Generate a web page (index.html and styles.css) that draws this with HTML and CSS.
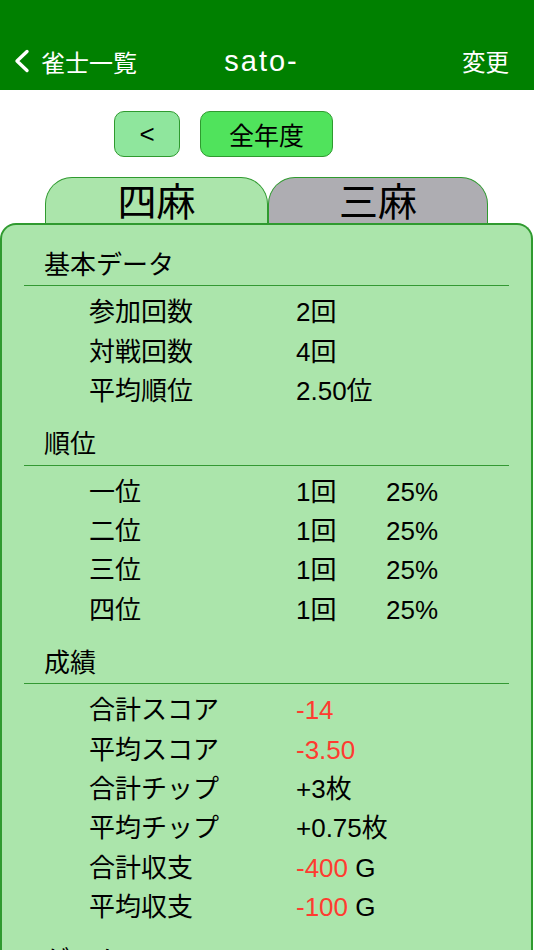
FILE: index.html
```html
<!DOCTYPE html>
<html lang="ja">
<head>
<meta charset="utf-8">
<title>sato-</title>
<link rel="stylesheet" href="styles.css">
</head>
<body>
<header class="nav">
  <div class="nav-left">
    <svg class="chev" width="18" height="24" viewBox="0 0 18 24"><path d="M14 2.5 L4 12 L14 21.5" fill="none" stroke="#fff" stroke-width="3.4" stroke-linecap="round" stroke-linejoin="round"/></svg>
    <span>雀士一覧</span>
  </div>
  <div class="nav-title">sato-</div>
  <div class="nav-right">変更</div>
</header>

<div class="period">
  <div class="btn btn-prev">&lt;</div>
  <div class="btn btn-year">全年度</div>
</div>

<div class="tabs">
  <div class="tab tab-on">四麻</div>
  <div class="tab tab-off">三麻</div>
</div>

<main class="card">
  <section class="sec">
    <div class="sec-title">基本データ</div>
    <div class="rows">
      <div class="row"><span>参加回数</span><span>2回</span><span></span></div>
      <div class="row"><span>対戦回数</span><span>4回</span><span></span></div>
      <div class="row"><span>平均順位</span><span>2.50位</span><span></span></div>
    </div>
  </section>
  <section class="sec">
    <div class="sec-title">順位</div>
    <div class="rows">
      <div class="row"><span>一位</span><span>1回</span><span>25%</span></div>
      <div class="row"><span>二位</span><span>1回</span><span>25%</span></div>
      <div class="row"><span>三位</span><span>1回</span><span>25%</span></div>
      <div class="row"><span>四位</span><span>1回</span><span>25%</span></div>
    </div>
  </section>
  <section class="sec">
    <div class="sec-title">成績</div>
    <div class="rows">
      <div class="row"><span>合計スコア</span><span class="neg">-14</span><span></span></div>
      <div class="row"><span>平均スコア</span><span class="neg">-3.50</span><span></span></div>
      <div class="row"><span>合計チップ</span><span>+3枚</span><span></span></div>
      <div class="row"><span>平均チップ</span><span>+0.75枚</span><span></span></div>
      <div class="row"><span>合計収支</span><span><span class="neg">-400</span> G</span><span></span></div>
      <div class="row"><span>平均収支</span><span><span class="neg">-100</span> G</span><span></span></div>
    </div>
  </section>
  <section class="sec">
    <div class="sec-title">ゲーム</div>
  </section>
</main>
</body>
</html>
```

FILE: styles.css
```css
html, body {
  margin: 0;
  padding: 0;
  background: #ffffff;
  overflow: hidden;
}
body {
  width: 534px;
  height: 950px;
  font-family: "Liberation Sans", "Noto Sans CJK JP", sans-serif;
  color: #000;
}
.nav {
  height: 90px;
  box-sizing: border-box;
  padding: 30px 25px 0 14px;
  background: #008000;
  color: #fff;
  display: grid;
  grid-template-columns: 1fr auto 1fr;
  align-items: center;
}
.nav-left {
  display: flex;
  align-items: center;
  gap: 10px;
  font-size: 24px;
  padding-top: 2px;
}
.chev { display: block; margin-left: -1px; }
.nav-title {
  font-size: 29px;
  letter-spacing: 2px;
  padding-top: 2px;
}
.nav-right {
  justify-self: end;
  font-size: 23.5px;
  padding-top: 2px;
}
.period {
  display: flex;
  gap: 20px;
  padding: 21px 0 0 114px;
}
.btn {
  height: 46px;
  box-sizing: border-box;
  border: 1.5px solid #2f9a2f;
  border-radius: 10px;
  display: flex;
  align-items: center;
  justify-content: center;
}
.btn-prev {
  width: 66px;
  background: #8fe69d;
  font-size: 26px;
}
.btn-year {
  width: 133px;
  background: #50e35c;
  font-size: 25px;
}
.tabs {
  display: flex;
  padding: 20px 0 0 45px;
}
.tab {
  height: 46px;
  box-sizing: border-box;
  border: 1.5px solid #2f9a2f;
  border-bottom: none;
  border-radius: 27px 27px 0 0;
  display: flex;
  align-items: center;
  justify-content: center;
  font-size: 39px;
  line-height: 1;
  padding-top: 4px;
}
.tab-on {
  width: 223px;
  background: #abe5ab;
}
.tab-off {
  width: 220px;
  background: #aeadb2;
}
.card {
  display: block;
  height: 740px;
  box-sizing: border-box;
  margin: 0 1px 0 0;
  background: #abe5ab;
  border: 2px solid #2f9a2f;
  border-bottom: none;
  border-radius: 16px 16px 0 0;
  padding: 21px 22px 0 22px;
}
.sec {
  margin-bottom: 13.6px;
}
.sec-title {
  font-size: 26px;
  line-height: 39.4px;
  padding-left: 20px;
  border-bottom: 1.5px solid #339933;
}
.rows {
  padding: 7px 0 0 65px;
}
.row {
  display: grid;
  grid-template-columns: 207px 90px auto;
  font-size: 26px;
  line-height: 39.4px;
  white-space: nowrap;
}
.neg {
  color: #ff3b30;
}
```
